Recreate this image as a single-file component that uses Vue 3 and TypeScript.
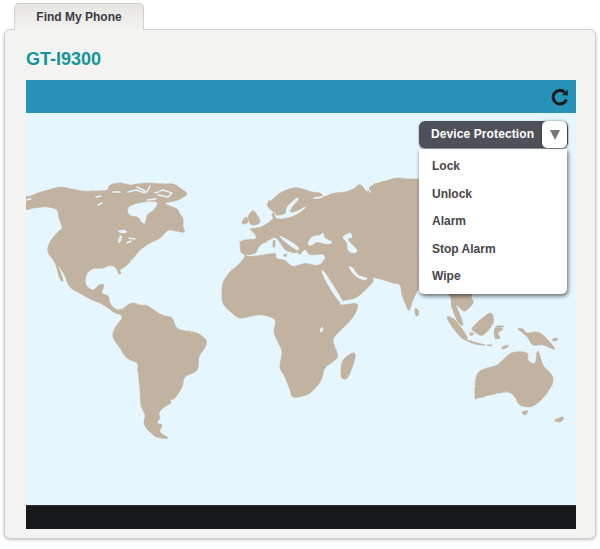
<template>
  <div class="page">
    <div class="tab">Find My Phone</div>
    <div class="panel">
      <h1 class="device-name">GT-I9300</h1>
      <div class="map-box">
        <div class="map-header">
          <svg class="refresh" width="18" height="18" viewBox="0 0 18 18">
            <path d="M15.4 11.4A6.8 6.8 0 1 1 13.6 4.2" fill="none" stroke="#14191c" stroke-width="3" />
            <path d="M11 7 16.8 7.6 16.6 1.8Z" fill="#14191c" />
          </svg>
        </div>
        <div class="map-area">
          <svg class="world" width="550" height="392" viewBox="26 113 550 392">
            <defs>
              <filter id="rough" x="-2%" y="-2%" width="104%" height="104%">
                <feTurbulence type="fractalNoise" baseFrequency="0.4" numOctaves="2" seed="4" />
                <feDisplacementMap in="SourceGraphic" scale="1.8" />
                <feGaussianBlur stdDeviation="0.35" />
              </filter>
            </defs>
            <g filter="url(#rough)">
              <path v-for="(d, i) in landPaths" :key="'l' + i" :d="d" class="land" />
              <path v-for="(d, i) in waterPaths" :key="'w' + i" :d="d" class="sea" />
              <polyline v-for="(pts, i) in channels" :key="'c' + i" :points="pts" class="channel" />
              <polygon v-for="(pts, i) in inner" :key="'n' + i" :points="pts" class="land" />
            </g>
          </svg>

          <div class="protection">
            <div class="protection-btn">
              <span class="protection-label">Device Protection</span>
              <span class="protection-arrow"><i class="triangle" /></span>
            </div>
            <ul class="protection-menu">
              <li v-for="item in actions" :key="item">{{ item }}</li>
            </ul>
          </div>
        </div>
        <div class="map-footer" />
      </div>
    </div>
  </div>
</template>

<script setup lang="ts">
const actions: string[] = ['Lock', 'Unlock', 'Alarm', 'Stop Alarm', 'Wipe']

// continents, in page pixels
const land: string[] = [
  // north america
  '24,198 31,196 38,193 48,190 60,187 72,189 83,191 95,191 107,190 110,185 120,183 130,185 137,184 150,183 162,184 173,184 180,188 187,194 180,199 175,201 165,203 170,206 177,209 180,214 183,219 183,226 184,232 176,231 169,230 165,233 160,238 150,243 144,247 140,250 134,257 127,265 120,270 121,273 119,274 116,268 113,266 108,266 103,268 92,269 86,276 86,285 93,290 99,285 104,285 102,293 108,296 110,303 115,309 122,310 120,314 115,313 108,308 100,303 92,300 83,295 70,287 65,276 58,265 63,280 60,279 55,263 48,252 50,242 58,232 62,228 59,218 57,210 48,207 42,207 34,208 24,209',
  // south america
  '120,312 128,305 133,303 140,305 148,306 158,313 165,316 172,318 177,328 186,331 197,333 206,340 205,347 199,357 197,370 185,377 182,387 175,398 170,400 171,403 163,408 159,413 160,418 157,423 162,425 160,432 168,438 157,437 148,430 144,423 145,415 141,405 140,390 138,370 137,363 127,358 120,348 113,337 115,328 122,318',
  // eurasia and africa
  '240,242 245,240 255,239 256,236 252,231 250,229 256,228 261,227 268,223 273,219 272,214 274,213 275,217 277,217 276,214 274,212 270,209 267,205 268,202 272,200 280,193 293,188 303,189 312,192 320,193 322,196 314,198 318,199 326,196 335,193 345,192 355,188 358,185 362,186 367,192 369,188 375,184 385,181 397,178 410,179 425,178 450,172 480,170 520,175 555,185 560,195 545,205 540,230 520,250 510,270 490,280 472,294 473,303 465,311 460,308 456,305 460,315 463,325 458,322 452,308 450,296 440,285 425,285 418,290 413,300 409,310 406,305 402,295 400,285 393,283 380,279 373,278 372,283 357,297 342,301 341,305 357,304 353,317 338,333 333,340 336,350 337,358 325,368 322,378 318,385 310,393 303,396 293,397 290,390 285,377 280,367 282,352 278,342 274,332 275,320 263,315 252,316 240,318 232,313 224,305 222,297 223,283 230,272 238,265 245,256 241,252 240,242',
  // britain, ireland
  '252,211 255,212 260,222 252,225 248,218',
  '242,222 246,217 248,222 244,224',
  // madagascar, sri lanka
  '353,353 355,358 348,377 342,378 341,370 343,360',
  '415,309 418,310 419,314 416,316',
  // indonesia and new guinea
  '447,317 455,320 467,337 463,339 453,328',
  '473,327 490,313 493,323 483,335 475,332',
  '495,328 503,329 498,333 500,338 495,338',
  '466,340 485,345 475,344',
  '518,329 523,329 527,333 540,333 555,349 543,345 533,345 528,338 523,333',
  '470,333 473,333 473,335 470,335',
  '497,326 503,326 503,327 497,327',
  '553,339 557,338 557,340 553,341',
  '502,347 508,345 508,347 503,349',
  '487,345 492,345 491,346',
  // australia
  '475,397 478,373 497,365 507,356 515,352 527,353 528,360 535,363 538,351 543,365 553,378 547,393 533,406 520,405 515,397 507,392 490,395 478,398',
  '522,412 528,411 525,415',
  '555,420 563,417 562,421 557,422',
]

// seas and lakes laid over the land
const water: string[] = [
  // hudson bay
  '128,209 133,205 147,202 157,203 153,210 147,215 145,223 142,222 138,217 130,215',
  // mediterranean
  '246,255 255,254 260,246 268,241 275,238 279,242 285,250 293,253 298,253 300,255 305,250 310,255 323,255 324,260 317,265 305,263 293,266 285,260 277,258 275,253 260,255 251,256',
  '280,236 288,240 298,247 297,250 288,244 282,239',
  // black sea, caspian
  '308,244 312,237 320,235 323,233 325,238 332,242 327,244 317,242 312,245',
  '343,237 350,233 352,237 348,240 357,250 353,253 348,250 347,243',
  // red sea, persian gulf
  '322,272 325,273 342,300 338,300 327,283',
  '349,267 353,268 358,275 367,278 364,280 357,277 352,272',
  // baltic
  '297,198 298,200 292,207 290,212 295,212 305,207 304,209 295,215 285,218 277,218 277,216 285,214 287,207 292,202',
  // lakes
  '323,328 321,328 320,331 322,332',
  '118,231 124,230 127,232 122,233',
  '120,236 122,237 120,242 118,242',
]

const channels: string[] = [
  '113,192 120,192',
  '128,192 136,190 145,193',
  '137,187 147,192 150,186',
  '155,193 163,190 172,193 168,197 158,195',
  '147,200 156,199',
  '96,197 101,196',
  '98,205 102,203',
  '129,238 135,239',
  '127,243 131,241',
  '31,199 26,200',
  '314,198 322,197',
  '367,186 370,192',
]

// islands inside the seas
const inner: string[] = [
  '273,241 275,240 275,247 273,247',
  '283,255 287,254 286,257',
]

// closed catmull-rom curve through the points, so coasts don't look cut with scissors
const smooth = (pts: string): string => {
  const p = pts.split(' ').map((s) => s.split(',').map(Number))
  const n = p.length
  let d = `M${p[0][0]} ${p[0][1]}`
  for (let i = 0; i < n; i++) {
    const a = p[(i - 1 + n) % n]
    const b = p[i]
    const c = p[(i + 1) % n]
    const e = p[(i + 2) % n]
    const c1x = b[0] + (c[0] - a[0]) / 6
    const c1y = b[1] + (c[1] - a[1]) / 6
    const c2x = c[0] - (e[0] - b[0]) / 6
    const c2y = c[1] - (e[1] - b[1]) / 6
    d += `C${c1x.toFixed(1)} ${c1y.toFixed(1)} ${c2x.toFixed(1)} ${c2y.toFixed(1)} ${c[0]} ${c[1]}`
  }
  return d + 'Z'
}

const landPaths = land.map(smooth)
const waterPaths = water.map(smooth)
</script>

<style>
html,
body {
  background: #fff;
}
</style>

<style scoped>
.page {
  box-sizing: border-box;
  width: 600px;
  height: 549px;
  padding: 3px 4px 0;
  font-family: "Liberation Sans", Arial, sans-serif;
}

.tab {
  position: relative;
  z-index: 1;
  box-sizing: border-box;
  width: 130px;
  height: 27px;
  margin: 0 0 -1px 10px;
  padding-top: 5px;
  border: 1px solid #d0d0ce;
  border-bottom: none;
  border-radius: 5px 5px 0 0;
  background: linear-gradient(#e6e5e2, #f3f3f1);
  color: #3c3c46;
  font-size: 12px;
  font-weight: bold;
  line-height: 16px;
  text-align: center;
}

.panel {
  box-sizing: border-box;
  width: 592px;
  height: 510px;
  padding: 18px 20px 0 21px;
  border: 1px solid #d0d0ce;
  border-radius: 6px;
  background: #f3f3f1;
  box-shadow: 0 1px 3px rgba(0, 0, 0, 0.25);
}

.device-name {
  margin: 0 0 10px;
  color: #14959b;
  font-size: 18px;
  font-weight: bold;
  line-height: 22px;
}

.map-box {
  width: 550px;
}

.map-header {
  display: flex;
  align-items: center;
  justify-content: flex-end;
  height: 33px;
  padding-right: 7px;
  box-sizing: border-box;
  background: #2793b8;
}

.map-area {
  position: relative;
  height: 392px;
  background: #e5f6fe;
}

.world {
  display: block;
}

.land {
  fill: #c2b2a0;
  stroke: #c2b2a0;
  stroke-width: 0.6;
  stroke-linejoin: round;
}

.sea {
  fill: #e5f6fe;
  stroke: #e5f6fe;
  stroke-width: 0.4;
  stroke-linejoin: round;
}

.channel {
  fill: none;
  stroke: #e5f6fe;
  stroke-width: 1.4;
  stroke-linecap: round;
  stroke-linejoin: round;
}

.protection {
  position: absolute;
  top: 8px;
  left: 393px;
  width: 149px;
}

.protection-btn {
  display: flex;
  align-items: center;
  justify-content: space-between;
  height: 27px;
  border-radius: 6px;
  background: #4e5159;
  box-shadow: 0 1px 2px rgba(0, 0, 0, 0.5);
}

.protection-label {
  margin-top: -2px;
  padding-left: 12px;
  color: #fff;
  font-size: 12px;
  font-weight: bold;
  letter-spacing: 0.1px;
}

.protection-arrow {
  display: flex;
  align-items: center;
  justify-content: center;
  width: 25px;
  height: 27px;
  margin-right: 1px;
  border-radius: 5px;
  background: #fff;
  box-shadow: 0 0 3px rgba(0, 0, 0, 0.4);
}

.triangle {
  width: 0;
  height: 0;
  border-top: 10px solid #77777a;
  border-left: 5px solid transparent;
  border-right: 5px solid transparent;
}

.protection-menu {
  box-sizing: border-box;
  width: 148px;
  height: 145px;
  margin: 1px 0 0;
  padding: 4px 0 0 13px;
  border-radius: 0 0 5px 5px;
  background: #fff;
  box-shadow: 1px 2px 4px rgba(0, 0, 0, 0.6);
  list-style: none;
}

.protection-menu li {
  height: 27.5px;
  color: #46454a;
  font-size: 12px;
  font-weight: bold;
  line-height: 27.5px;
}

.map-footer {
  height: 24px;
  background: #17191b;
  border-top: 1px solid #2b2f33;
  box-sizing: border-box;
}
</style>
